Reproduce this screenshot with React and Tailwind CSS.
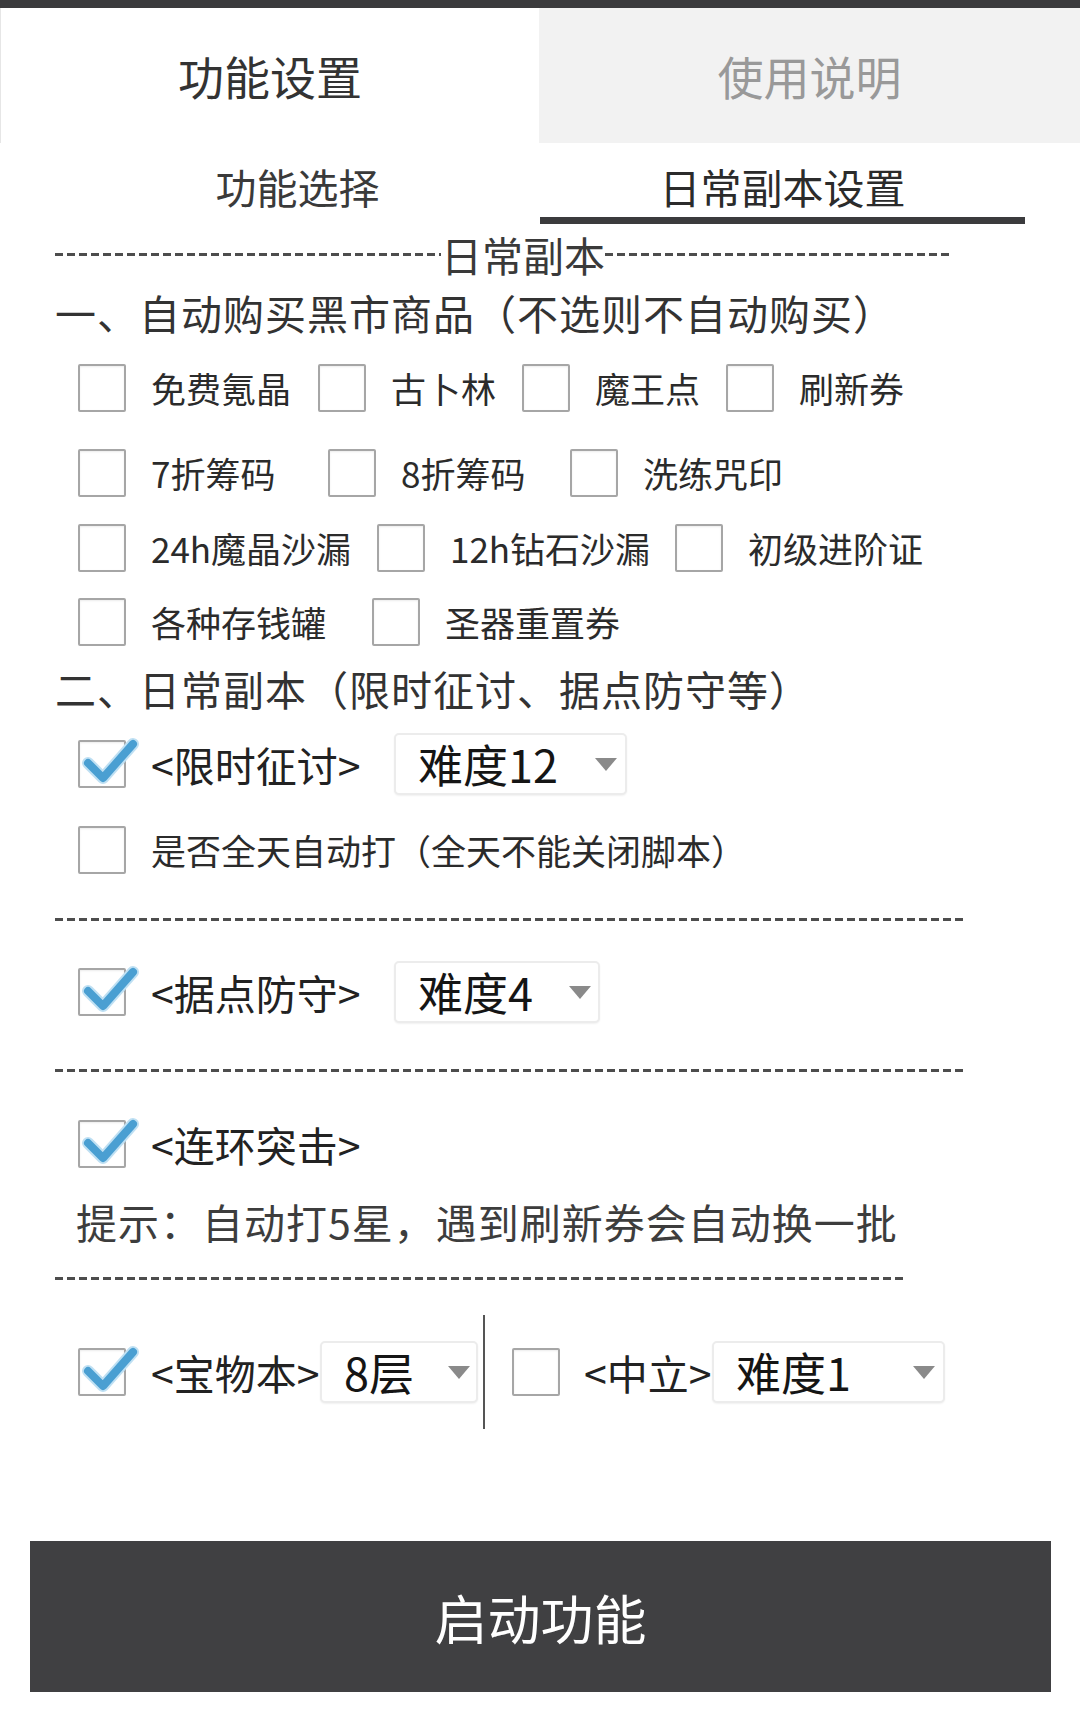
import React from "react";

// 复选框 (勾选时画蓝色对勾)
function Box({ checked }) {
  return (
    <div className="relative w-[48px] h-[48px] shrink-0 border-2 border-[#a6a6a6] rounded-[2px] bg-white shadow-[inset_0_1px_2px_rgba(0,0,0,0.08)]">
      {checked && (
        <svg
          className="absolute left-[-2px] top-[-2px] overflow-visible"
          width="60"
          height="48"
          viewBox="0 0 60 48"
        >
          <path
            d="M10 23 L25 38 L55 4"
            fill="none"
            stroke="#bfe0f3"
            strokeWidth="12"
            strokeLinecap="round"
            strokeLinejoin="round"
          />
          <path
            d="M10 23 L25 38 L55 4"
            fill="none"
            stroke="#4a9fd2"
            strokeWidth="8"
            strokeLinecap="round"
            strokeLinejoin="round"
          />
        </svg>
      )}
    </div>
  );
}

function Item({ label, w, checked }) {
  return (
    <div className={`flex items-center ${w}`}>
      <Box checked={checked} />
      <span className="ml-[25px] text-[35px] leading-[44px] text-[#2b2b2b] whitespace-nowrap">{label}</span>
    </div>
  );
}

function Select({ value, w, pr }) {
  return (
    <div
      className={`flex items-center justify-between h-[62px] ${w} pl-[22px] ${pr} border-2 border-[#ececec] rounded-[5px] bg-white shadow-[0_1px_2px_rgba(0,0,0,0.06)]`}
    >
      <span className="text-[45px] leading-[50px] text-[#151515]">{value}</span>
      <svg width="22" height="13" viewBox="0 0 22 13">
        <path d="M0 0 L22 0 L11 13 Z" fill="#8a8a8a" />
      </svg>
    </div>
  );
}

function Dashes({ w }) {
  return (
    <div
      className={`ml-[55px] h-[3px] ${w} bg-[repeating-linear-gradient(90deg,#4d4d4d_0_8px,transparent_8px_12px)]`}
    />
  );
}

export default function App() {
  return (
    <div className="w-[1080px] h-[1713px] bg-white overflow-hidden font-['Noto_Sans_CJK_SC','Noto_Sans',sans-serif] text-[#333]">
      {/* 顶部条 */}
      <div className="h-[8px] bg-[#3b3b3d]" />

      {/* 主标签 */}
      <div className="flex h-[135px]">
        <div className="w-[539px] flex items-center justify-center text-[46px] text-[#333] border-l border-[#e6e6e6]">
          功能设置
        </div>
        <div className="flex-1 flex items-center justify-center bg-[#f2f2f2] text-[46px] text-[#999]">
          使用说明
        </div>
      </div>

      {/* 子标签 */}
      <div className="flex ml-[55px] w-[970px]">
        <div className="flex-1 flex flex-col items-center pt-[20px]">
          <span className="text-[41px] leading-[46px] text-[#3a3a3a]">功能选择</span>
          <div className="mt-[8px] h-[7px] w-full" />
        </div>
        <div className="flex-1 flex flex-col items-center pt-[20px]">
          <span className="text-[41px] leading-[46px] text-[#2b2b2b]">日常副本设置</span>
          <div className="mt-[8px] h-[7px] w-full bg-[#3b3b3d]" />
        </div>
      </div>

      {/* 日常副本 分隔 */}
      <div className="flex items-center mt-[7px] h-[46px]">
        <div className="ml-[55px] w-[386px] h-[3px] bg-[repeating-linear-gradient(90deg,#4d4d4d_0_8px,transparent_8px_12px)]" />
        <span className="text-[41px] leading-[46px] text-[#3a3a3a]">日常副本</span>
        <div className="w-[344px] h-[3px] bg-[repeating-linear-gradient(90deg,#4d4d4d_0_8px,transparent_8px_12px)]" />
      </div>

      <div className="mt-[12px] pl-[55px] text-[41px] leading-[46px] tracking-[1px] text-[#333]">
        一、自动购买黑市商品（不选则不自动购买）
      </div>

      {/* 黑市商品 */}
      <div className="flex items-center h-[48px] pl-[78px] mt-[29px]">
        <Item label="免费氪晶" w="w-[240px]" />
        <Item label="古卜林" w="w-[204px]" />
        <Item label="魔王点" w="w-[204px]" />
        <Item label="刷新券" w="" />
      </div>
      <div className="flex items-center h-[48px] pl-[78px] mt-[37px]">
        <Item label="7折筹码" w="w-[250px]" />
        <Item label="8折筹码" w="w-[242px]" />
        <Item label="洗练咒印" w="" />
      </div>
      <div className="flex items-center h-[48px] pl-[78px] mt-[27px]">
        <Item label="24h魔晶沙漏" w="w-[299px]" />
        <Item label="12h钻石沙漏" w="w-[298px]" />
        <Item label="初级进阶证" w="" />
      </div>
      <div className="flex items-center h-[48px] pl-[78px] mt-[26px]">
        <Item label="各种存钱罐" w="w-[294px]" />
        <Item label="圣器重置券" w="" />
      </div>

      <div className="mt-[19px] pl-[55px] text-[41px] leading-[46px] tracking-[1px] text-[#333]">
        二、日常副本（限时征讨、据点防守等）
      </div>

      {/* 限时征讨 */}
      <div className="flex items-center h-[62px] pl-[78px] mt-[22px]">
        <Box checked />
        <span className="ml-[25px] w-[243px] text-[41px] leading-[46px] text-[#222]">&lt;限时征讨&gt;</span>
        <Select value="难度12" w="w-[233px]" pr="pr-[8px]" />
      </div>
      <div className="flex items-center h-[48px] pl-[78px] mt-[31px]">
        <Box />
        <span className="ml-[25px] text-[35px] leading-[44px] text-[#2b2b2b]">是否全天自动打（全天不能关闭脚本）</span>
      </div>

      <div className="mt-[44px]">
        <Dashes w="w-[910px]" />
      </div>

      {/* 据点防守 */}
      <div className="flex items-center h-[62px] pl-[78px] mt-[40px]">
        <Box checked />
        <span className="ml-[25px] w-[243px] text-[41px] leading-[46px] text-[#222]">&lt;据点防守&gt;</span>
        <Select value="难度4" w="w-[206px]" pr="pr-[7px]" />
      </div>

      <div className="mt-[46px]">
        <Dashes w="w-[910px]" />
      </div>

      {/* 连环突击 */}
      <div className="flex items-center h-[48px] pl-[78px] mt-[48px]">
        <Box checked />
        <span className="ml-[25px] text-[41px] leading-[46px] text-[#222]">&lt;连环突击&gt;</span>
      </div>
      <div className="mt-[30px] pl-[76px] text-[41px] leading-[46px] tracking-[1px] text-[#3d3d3d]">
        提示：自动打5星，遇到刷新券会自动换一批
      </div>

      <div className="mt-[33px]">
        <Dashes w="w-[849px]" />
      </div>

      {/* 宝物本 / 中立 */}
      <div className="flex items-center h-[114px] pl-[78px] mt-[35px]">
        <Box checked />
        <span className="ml-[25px] w-[169px] text-[41px] leading-[46px] text-[#222]">&lt;宝物本&gt;</span>
        <Select value="8层" w="w-[158px]" pr="pr-[6px]" />
        <div className="ml-[5px] w-[2px] h-[114px] bg-[#555]" />
        <div className="ml-[27px]">
          <Box />
        </div>
        <span className="ml-[24px] w-[128px] text-[41px] leading-[46px] text-[#222]">&lt;中立&gt;</span>
        <Select value="难度1" w="w-[233px]" pr="pr-[8px]" />
      </div>

      {/* 启动按钮 */}
      <div className="mt-[112px] ml-[30px] w-[1021px] h-[151px] flex items-center justify-center bg-[#404042] text-white text-[53px] leading-[60px]">
        启动功能
      </div>
    </div>
  );
}
